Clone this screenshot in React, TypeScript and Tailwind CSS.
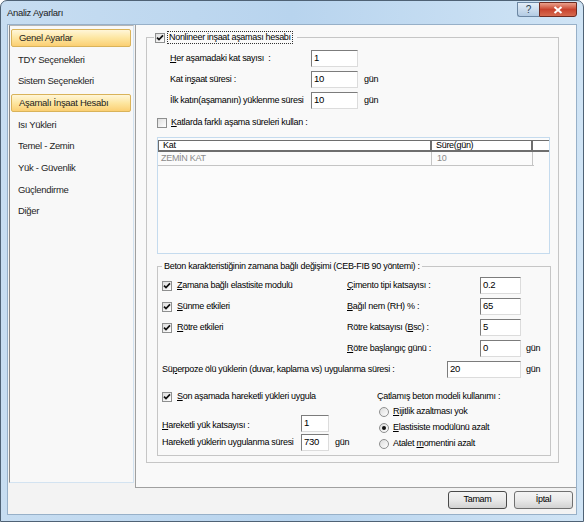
import React from 'react';

const sans = "font-['Liberation_Sans',Arial,sans-serif] tracking-[-0.3px]";

const menu = [
  { label: 'Genel Ayarlar', active: true },
  { label: 'TDY Seçenekleri' },
  { label: 'Sistem Seçenekleri' },
  { label: 'Aşamalı İnşaat Hesabı', active: true },
  { label: 'Isı Yükleri' },
  { label: 'Temel - Zemin' },
  { label: 'Yük - Güvenlik' },
  { label: 'Güçlendirme' },
  { label: 'Diğer' },
];

const Check = ({ checked }: { checked?: boolean }) => (
  <span className="flex h-[10px] w-[10px] shrink-0 items-center justify-center border border-[#8e8f8f] bg-gradient-to-br from-[#dedede] to-white">
    {checked && (
      <svg width="8" height="8" viewBox="0 0 8 8">
        <path d="M1 3.6 L3 5.6 L7 1.4" stroke="#111" strokeWidth="1.7" fill="none" />
      </svg>
    )}
  </span>
);

const Radio = ({ checked }: { checked?: boolean }) => (
  <span className="flex h-[10px] w-[10px] shrink-0 items-center justify-center rounded-full border border-[#8e8f8f] bg-gradient-to-br from-[#dcdcdc] to-white">
    {checked && <span className="h-[4px] w-[4px] rounded-full bg-[#111]" />}
  </span>
);

const Field = ({ value, w }: { value: string; w: string }) => (
  <div
    className={`flex h-[17px] ${w} shrink-0 items-center border border-t-[#7c7c7c] border-l-[#7c7c7c] border-r-[#dcdcdc] border-b-[#dcdcdc] bg-white pl-[2px] text-[9.5px]`}
  >
    {value}
  </div>
);

const U = ({ children }: { children: React.ReactNode }) => <span className="underline underline-offset-1">{children}</span>;

const Gun = ({ ml }: { ml: string }) => <span className={`${ml}`}>gün</span>;

export default function App() {
  return (
    <div className={`${sans} h-[522px] w-[584px] overflow-hidden whitespace-nowrap text-[9px] text-black`}>
      <div className="flex h-full w-full flex-col rounded-t-[7px] border border-[#4f6275] bg-gradient-to-r from-[#c7ddf1] via-[#b8d4ee] to-[#d0e4f5]">
        {/* title bar */}
        <div className="flex h-[23px] shrink-0 items-start">
          <div className="pl-[6px] pt-[6px] text-[9.5px] leading-[12px] text-[#1b1b1b]">Analiz Ayarları</div>
          <div className="ml-auto mr-[6px] mt-[1px] flex">
            <div className="flex h-[15px] w-[22px] items-center justify-center rounded-bl-[3px] border border-r-0 border-[#6c87a3] bg-gradient-to-b from-[#e4eef8] to-[#b3cbe3] text-[10px] leading-none text-[#2c3e50]">
              ?
            </div>
            <div className="flex h-[15px] w-[38px] items-center justify-center rounded-br-[3px] border border-[#6e2a20] bg-gradient-to-b from-[#e9a08c] via-[#c8432e] to-[#d66a4f]">
              <svg width="10" height="8" viewBox="0 0 10 8">
                <path d="M1.5 1 L8.5 7 M8.5 1 L1.5 7" stroke="white" strokeWidth="2" />
              </svg>
            </div>
          </div>
        </div>

        {/* client */}
        <div className="mx-[6px] mb-[6px] flex flex-1 flex-col border border-[#97b0c8] bg-[#f3f3f3]">
          <div className="flex h-[463px] shrink-0">
            {/* left list */}
            <div className="w-[127px] shrink-0 pb-[5px] pl-[1px]">
              <div className="flex h-full w-[125px] flex-col gap-[3.7px] border border-l-[#8a8a8a] border-t-[#b5b5b5] border-r-[#d3e3f1] border-b-[#d3e3f1] bg-[#f8f8f8] px-[1px] pt-[3px]">
                {menu.map((m) => (
                  <div
                    key={m.label}
                    className={`flex h-[18px] w-[120px] shrink-0 items-center pl-[7px] text-[9.5px] text-[#1e1e1e] ${
                      m.active
                        ? 'rounded-[2px] border border-[#d9b35a] bg-gradient-to-b from-[#fff6d8] via-[#fde6a0] to-[#fbcf72] pl-[6px]'
                        : ''
                    }`}
                  >
                    {m.label}
                  </div>
                ))}
              </div>
            </div>

            {/* right panel */}
            <div className="flex-1 border-b border-l border-[#a0a0a0] bg-[#f9f9f9] pl-[10px] pt-[6px]">
              <fieldset className="h-[432px] w-[413px] border border-[#c6c6c6] pl-[10px]">
                <legend className="-ml-[3px] pr-[4px]">
                  <span className="flex h-[13px] items-center">
                    <span className="ml-[1px]">
                      <Check checked />
                    </span>
                    <span className="ml-[2px] flex h-[13px] items-center border border-dotted border-[#333] px-[1px]">
                      Nonlineer inşaat aşaması hesabı
                    </span>
                  </span>
                </legend>

                <div className="mt-[4px] flex h-[21px] items-center">
                  <span className="w-[154px] pl-[13px]">
                    <U>H</U>er aşamadaki kat sayısı&nbsp; :
                  </span>
                  <Field value="1" w="w-[47px]" />
                </div>
                <div className="flex h-[21px] items-center">
                  <span className="w-[154px] pl-[13px]">
                    Kat in<U>ş</U>aat süresi :
                  </span>
                  <Field value="10" w="w-[47px]" />
                  <Gun ml="ml-[6px]" />
                </div>
                <div className="flex h-[21px] items-center">
                  <span className="w-[154px] pl-[13px]">İlk katın(aşamanın) yüklenme süresi</span>
                  <Field value="10" w="w-[47px]" />
                  <Gun ml="ml-[6px]" />
                </div>
                <div className="mt-[1px] flex h-[22px] items-center">
                  <Check />
                  <span className="ml-[4px]">
                    <U>K</U>atlarda farklı aşama süreleri kullan :
                  </span>
                </div>

                {/* list view */}
                <div className="mt-[3px] h-[117px] w-[393px] border border-[#c5dbee] bg-[#fbfbfb] pt-[2px]">
                  <div className="flex h-[12px] border-b-2 border-l border-t border-[#6e6e6e] bg-white leading-[9px]">
                    <div className="w-[273px] shrink-0 border-r-2 border-[#6e6e6e] pl-[4px]">Kat</div>
                    <div className="w-[101px] shrink-0 border-r-2 border-[#6e6e6e] pl-[4px]">Süre(gün)</div>
                    <div className="flex-1" />
                  </div>
                  <div className="flex h-[14px] w-[376px] items-center border-b border-[#c4c4c4] text-[#8a8a8a]">
                    <div className="flex h-full w-[274px] shrink-0 items-center border-r border-[#c4c4c4] pl-[3px]">ZEMİN KAT</div>
                    <div className="flex h-full w-[101px] shrink-0 items-center border-r border-[#c4c4c4] pl-[5px]">10</div>
                  </div>
                </div>

                {/* beton */}
                <fieldset className="mt-[6px] h-[196px] w-[394px] border border-[#c6c6c6] pl-[4px]">
                  <legend className="px-[2px] leading-[12px]">
                    Beton karakteristiğinin zamana bağlı değişimi (CEB-FIB 90 yöntemi) :
                  </legend>

                  <div className="mt-[3px] flex h-[21px] items-center">
                    <div className="flex w-[185px] items-center">
                      <Check checked />
                      <span className="ml-[5px]">
                        <U>Z</U>amana bağlı elastisite modulü
                      </span>
                    </div>
                    <span className="w-[133px]">
                      <U>Ç</U>imento tipi katsayısı :
                    </span>
                    <Field value="0.2" w="w-[41px]" />
                  </div>
                  <div className="flex h-[21px] items-center">
                    <div className="flex w-[185px] items-center">
                      <Check checked />
                      <span className="ml-[5px]">
                        <U>S</U>ünme etkileri
                      </span>
                    </div>
                    <span className="w-[133px]">
                      <U>B</U>ağıl nem (RH) % :
                    </span>
                    <Field value="65" w="w-[41px]" />
                  </div>
                  <div className="flex h-[21px] items-center">
                    <div className="flex w-[185px] items-center">
                      <Check checked />
                      <span className="ml-[5px]">
                        <U>R</U>ötre etkileri
                      </span>
                    </div>
                    <span className="w-[133px]">
                      Rötre katsayısı (<U>B</U>sc) :
                    </span>
                    <Field value="5" w="w-[41px]" />
                  </div>
                  <div className="flex h-[21px] items-center">
                    <div className="w-[185px]" />
                    <span className="w-[133px]">
                      <U>R</U>ötre başlangıç günü :
                    </span>
                    <Field value="0" w="w-[41px]" />
                    <Gun ml="ml-[5px]" />
                  </div>
                  <div className="flex h-[21px] items-center">
                    <span className="w-[285px]">
                      Sü<U>p</U>erpoze ölü yüklerin (duvar, kaplama vs) uygulanma süresi :
                    </span>
                    <Field value="20" w="w-[74px]" />
                    <Gun ml="ml-[5px]" />
                  </div>

                  <div className="mt-[9px] flex">
                    <div className="w-[215px] shrink-0">
                      <div className="flex h-[16px] items-center">
                        <Check checked />
                        <span className="ml-[5px]">
                          <U>S</U>on aşamada hareketli yükleri uygula
                        </span>
                      </div>
                      <div className="mt-[10px] flex h-[17px] items-center">
                        <span className="w-[139px] pt-[4px]">
                          <U>H</U>areketli yük katsayısı :
                        </span>
                        <Field value="1" w="w-[28px]" />
                      </div>
                      <div className="mt-[2px] flex h-[17px] items-center">
                        <span className="w-[139px] pt-[1px]">Hareketli yüklerin uygulanma süresi</span>
                        <Field value="730" w="w-[28px]" />
                        <Gun ml="ml-[6px]" />
                      </div>
                    </div>
                    <div className="flex-1">
                      <div className="flex h-[15px] items-center">Çatlamış beton modeli kullanımı :</div>
                      <div className="flex h-[16px] items-center pl-[2px]">
                        <Radio />
                        <span className="ml-[4px]">
                          <U>R</U>ijitlik azaltması yok
                        </span>
                      </div>
                      <div className="flex h-[16px] items-center pl-[2px]">
                        <Radio checked />
                        <span className="ml-[4px]">
                          <U>E</U>lastisiste modülünü azalt
                        </span>
                      </div>
                      <div className="flex h-[16px] items-center pl-[2px]">
                        <Radio />
                        <span className="ml-[4px]">
                          Atalet <U>m</U>omentini azalt
                        </span>
                      </div>
                    </div>
                  </div>
                </fieldset>
              </fieldset>
            </div>
          </div>

          {/* buttons */}
          <div className="flex flex-1 items-start justify-end gap-[7px] pr-[3px] pt-[3px]">
            <button className="flex h-[18px] w-[59px] items-center justify-center rounded-[3px] border border-[#4a4a4a] bg-gradient-to-b from-[#f4f4f4] via-[#e9e9e9] to-[#d2d2d2]">
              Tamam
            </button>
            <button className="flex h-[18px] w-[59px] items-center justify-center rounded-[3px] border border-[#707070] bg-gradient-to-b from-[#f4f4f4] via-[#e9e9e9] to-[#d2d2d2]">
              İptal
            </button>
          </div>
        </div>
      </div>
    </div>
  );
}
